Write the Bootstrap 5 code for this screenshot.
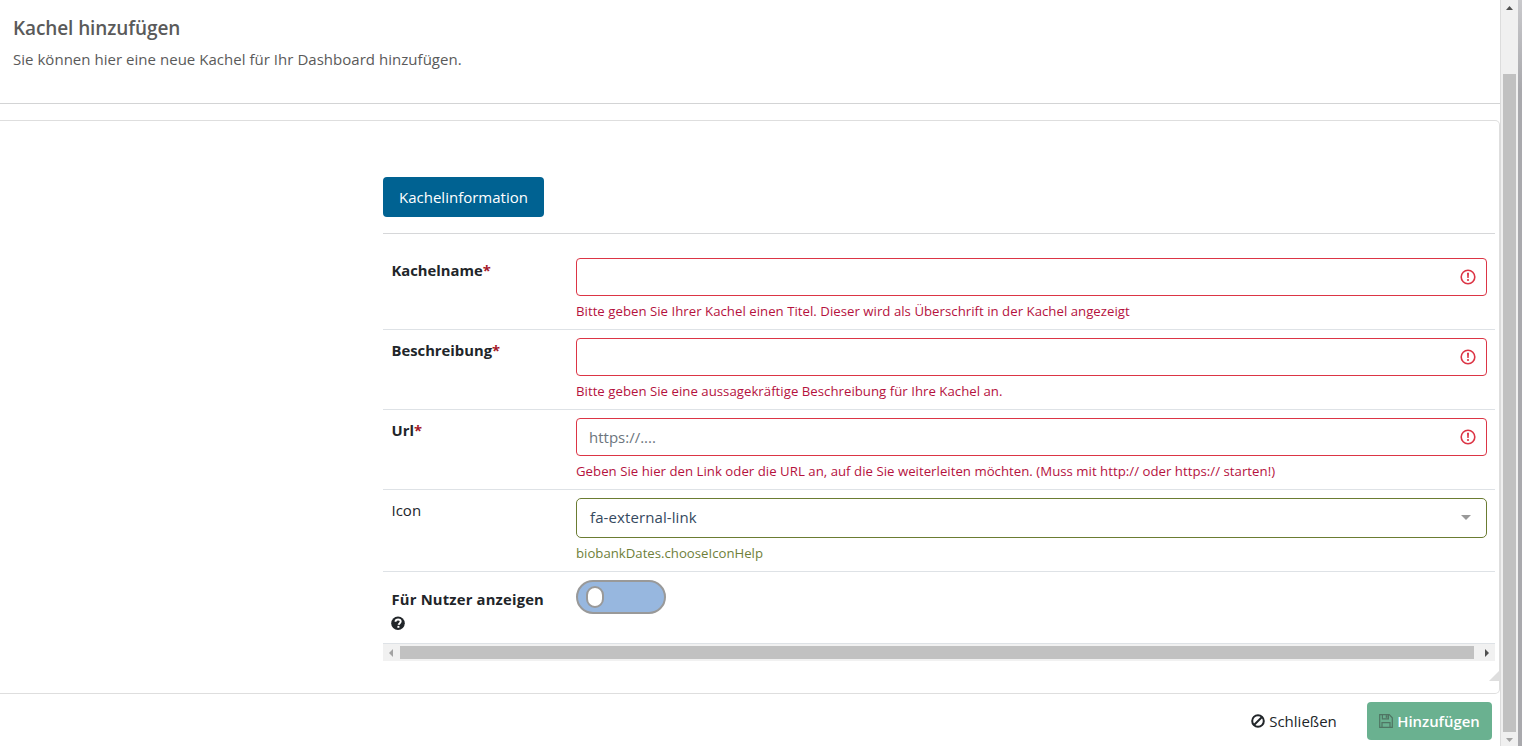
<!DOCTYPE html>
<html lang="de">
<head>
<meta charset="utf-8">
<meta name="viewport" content="width=device-width, initial-scale=1">
<title>Kachel hinzufügen</title>
<link rel="stylesheet" href="https://cdn.jsdelivr.net/npm/bootstrap@5.3.0/dist/css/bootstrap.min.css">
<style>
  body { font-family: "Open Sans", "Noto Sans", sans-serif; font-size: 15px; line-height: 24px; color: #212529; height: 746px; overflow: hidden; background: #fff; }
  .page-body { height: 746px; }
  .page-head { height: 104px; padding: 16px 13px 0; border-bottom: 1px solid #d3d4d5; color: #5a5a5a; }
  .page-head h1 { font-size: 19px; line-height: 24px; font-weight: 600; margin: 0 0 7px; letter-spacing: -.1px; }
  .page-head p { letter-spacing: .03px; }
  .panel { height: 574px; margin-top: 16px; padding: 56px 4px 0 383px; border: 1px solid #dedede; border-left: 0; border-radius: 0 5px 5px 0; }
  .tab-head { height: 57px; border-bottom: 1px solid #d6d7d9; margin-bottom: 16px; }
  .btn-tab { background: #006292; color: #fff; width: 161px; height: 40px; padding: 0; font-size: 15px; border: 0; border-radius: 4px; }
  .form-line { border-bottom: 1px solid #dee2e6; padding: 8px; }
  .form-line.last-line { height: 72px; }
  .field-label { width: 185px; flex: none; padding-left: .5px; }
  .field-label.fw-bold { font-size: 14.8px; }
  .last-line .field-label { padding-top: 7px; letter-spacing: .18px; }
  .last-line svg { margin-left: -.5px; }
  .req { color: #a5182a; }
  .form-control { height: 38px; font-size: 15px; border-radius: 4px; padding: 6px 12px; }
  .form-control::placeholder { color: #6c757d; }
  .form-control.is-invalid { border-color: #dc3545; padding-right: 40px; background-image: none; }
  .alert-mark { position: absolute; right: 11px; top: 11px; }
  .help { font-size: 13.2px; line-height: 21px; padding-top: 5px; height: 25px; color: #b5123e; letter-spacing: .03px; }
  .help.ok { color: #6f7f3a; letter-spacing: 0; }
  .picker { height: 40px; border: 1px solid #6b7c32; border-radius: 5px; color: #35495e; padding: 0 15px 2px 13px; letter-spacing: .1px; }
  .toggle { width: 90px; height: 34px; border: 2px solid #999; border-radius: 17px; background: #97b7df; padding-left: 8px; }
  .knob { width: 18px; height: 22px; border: 2px solid #999; border-radius: 9px; background: #fff; }
  .hbar { height: 17px; background: #f1f1f1; }
  .hbar .thumb { height: 13px; background: #c1c1c1; }
  .hbar svg { width: 17px; height: 17px; flex: none; }
  .grip { position: absolute; right: 0; bottom: 12px; }
  .page-foot { height: 52px; padding: 8px 8px 0; }
  .btn-close-page { width: 114px; height: 38px; padding: 0; font-size: 15px; color: #212529; border: 0; }
  .btn-add { width: 125px; height: 38px; padding: 0; font-size: 14.9px; font-weight: 600; color: #fff; background: #6ab190; border: 0; border-radius: 4px; }
  .vbar { width: 18px; background: #f0f0f0; border-left: 1px solid #dcdcdc; }
  .vbar .thumb { width: 13px; height: 658px; margin-top: 57px; background: #c1c1c1; }
  .edge { width: 4px; background: linear-gradient(#c9c9cc, #a9a9ad 90px); }
</style>
</head>
<body>
<div class="page-body d-flex">
  <main class="flex-grow-1">
    <header class="page-head">
      <h1>Kachel hinzufügen</h1>
      <p class="mb-0">Sie können hier eine neue Kachel für Ihr Dashboard hinzufügen.</p>
    </header>
    <section class="panel position-relative">
      <div class="tab-head"><button class="btn btn-tab" type="button">Kachelinformation</button></div>
      <form>
        <div class="form-line d-flex">
          <label class="field-label fw-bold">Kachelname<span class="req">*</span></label>
          <div class="flex-grow-1">
            <div class="position-relative"><input class="form-control is-invalid" type="text">
              <svg class="alert-mark" width="16" height="16" viewBox="0 0 16 16"><circle cx="8" cy="8" r="6.8" fill="none" stroke="#dc3545" stroke-width="1.6"/><path d="M7 3.800h2l-.3 5.100h-1.400z" fill="#dc3545"/><circle cx="8" cy="11" r="1.1" fill="#dc3545"/></svg></div>
            <div class="help">Bitte geben Sie Ihrer Kachel einen Titel. Dieser wird als Überschrift in der Kachel angezeigt</div>
          </div>
        </div>
        <div class="form-line d-flex">
          <label class="field-label fw-bold">Beschreibung<span class="req">*</span></label>
          <div class="flex-grow-1">
            <div class="position-relative"><input class="form-control is-invalid" type="text">
              <svg class="alert-mark" width="16" height="16" viewBox="0 0 16 16"><circle cx="8" cy="8" r="6.8" fill="none" stroke="#dc3545" stroke-width="1.6"/><path d="M7 3.800h2l-.3 5.100h-1.400z" fill="#dc3545"/><circle cx="8" cy="11" r="1.1" fill="#dc3545"/></svg></div>
            <div class="help">Bitte geben Sie eine aussagekräftige Beschreibung für Ihre Kachel an.</div>
          </div>
        </div>
        <div class="form-line d-flex">
          <label class="field-label fw-bold">Url<span class="req">*</span></label>
          <div class="flex-grow-1">
            <div class="position-relative"><input class="form-control is-invalid" type="text" placeholder="https://....">
              <svg class="alert-mark" width="16" height="16" viewBox="0 0 16 16"><circle cx="8" cy="8" r="6.8" fill="none" stroke="#dc3545" stroke-width="1.6"/><path d="M7 3.800h2l-.3 5.100h-1.400z" fill="#dc3545"/><circle cx="8" cy="11" r="1.1" fill="#dc3545"/></svg></div>
            <div class="help">Geben Sie hier den Link oder die URL an, auf die Sie weiterleiten möchten. (Muss mit http:// oder https:// starten!)</div>
          </div>
        </div>
        <div class="form-line d-flex">
          <label class="field-label">Icon</label>
          <div class="flex-grow-1">
            <div class="picker d-flex align-items-center justify-content-between">
              <span>fa-external-link</span>
              <svg width="10" height="5" viewBox="0 0 10 5"><path d="M0 0h10L5 5z" fill="#999"/></svg>
            </div>
            <div class="help ok">biobankDates.chooseIconHelp</div>
          </div>
        </div>
        <div class="form-line last-line d-flex">
          <label class="field-label fw-bold">Für Nutzer anzeigen<br>
            <svg class="d-block" width="14" height="24" viewBox="0 0 14 24"><circle cx="7" cy="12.300" r="6.8" fill="#212529"/><path d="M4.500 10.800c.1-3.200 5.200-3 5.200-.2 0 1.700-1.900 1.800-2.200 3.200" fill="none" stroke="#fff" stroke-width="1.9"/><path d="M6.400 14.900h2v1.900h-2z" fill="#fff"/></svg>
          </label>
          <div><div class="toggle d-flex align-items-center"><span class="knob"></span></div></div>
        </div>
      </form>
      <div class="hbar d-flex align-items-center">
        <svg viewBox="0 0 17 17"><path d="M10 5v8L6 9z" fill="#a3a3a3"/></svg>
        <div class="thumb flex-grow-1"></div>
        <svg class="ms-1" viewBox="0 0 17 17"><path d="M7 5v8l4-4z" fill="#505050"/></svg>
      </div>
      <svg class="grip" width="10" height="10" viewBox="0 0 10 10"><path d="M10 0v10H0z" fill="#dedede"/></svg>
    </section>
    <footer class="page-foot d-flex justify-content-end">
      <button class="btn btn-close-page d-flex align-items-center justify-content-center" type="button">
        <svg class="me-1" width="14" height="14" viewBox="0 0 14 14" fill="none" stroke="#212529" stroke-width="2"><circle cx="7" cy="7" r="5.8"/><path d="M11 3L3 11"/></svg>Schließen</button>
      <button class="btn btn-add d-flex align-items-center justify-content-center ms-3" type="button">
        <svg class="me-1" width="14" height="14" viewBox="0 0 14 14" fill="none" stroke="#4f7563" stroke-width="1.2"><path d="M.7.7h9.500l3.100 3.100v9.500H.7zM3 13.300V8.600h8v4.700M3.400.7v4.200h6V.7"/><path d="M6.700 1.200h1.800v2.600H6.700z" fill="#4f7563" stroke="none"/></svg>Hinzufügen</button>
    </footer>
  </main>
  <div class="vbar d-flex flex-column align-items-center justify-content-between">
    <svg width="17" height="17" viewBox="0 0 17 17" class="flex-shrink-0"><path d="M5 10h7L8.500 6z" fill="#505050"/></svg>
    <div class="thumb flex-shrink-0"></div>
    <svg width="17" height="14" viewBox="0 0 17 14" class="flex-shrink-0"><path d="M5 6h7L8.500 10z" fill="#a3a3a3"/></svg>
  </div>
  <div class="edge"></div>
</div>
<script src="https://cdn.jsdelivr.net/npm/bootstrap@5.3.0/dist/js/bootstrap.bundle.min.js"></script>
</body>
</html>
